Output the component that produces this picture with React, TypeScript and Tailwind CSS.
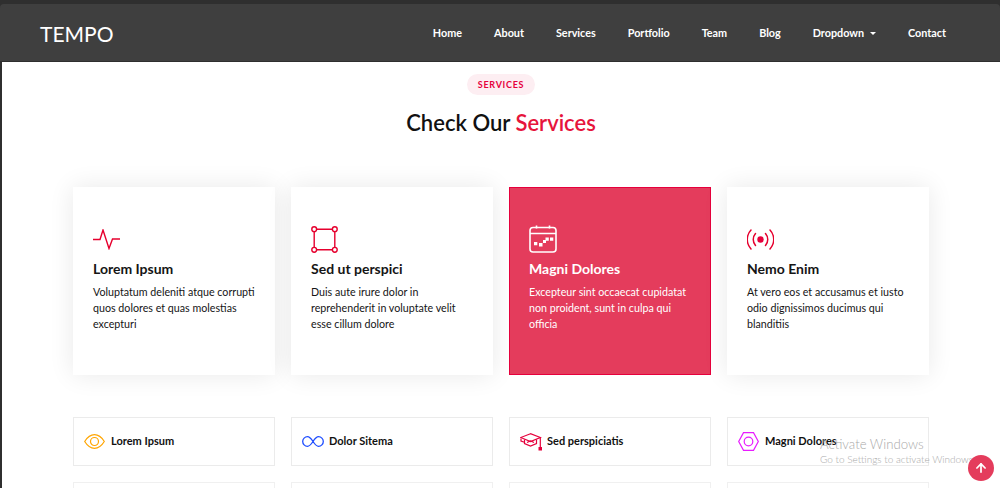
import { ArrowUp } from 'lucide-react';
import type { ReactNode } from 'react';

const font = "[font-family:'Lato',sans-serif]";

const links = ['Home', 'About', 'Services', 'Portfolio', 'Team', 'Blog'];

function Pulse() {
  return (
    <svg width="27" height="21" viewBox="0 0 27 21" fill="none" stroke="#e6002e" strokeWidth="1.4">
      <path d="M0 10.5h7L10 1l6 18.5 3.5-9.5H27" />
    </svg>
  );
}

function Square() {
  return (
    <svg width="27" height="27" viewBox="0 0 27 27" fill="none" stroke="#e6002e" strokeWidth="1.4">
      <path d="M6 3.2h15M23.8 6v15M21 23.8H6M3.2 21V6" />
      <circle cx="3.2" cy="3.2" r="2.4" fill="#fff" />
      <circle cx="23.8" cy="3.2" r="2.4" fill="#fff" />
      <circle cx="3.2" cy="23.8" r="2.4" fill="#fff" />
      <circle cx="23.8" cy="23.8" r="2.4" fill="#fff" />
    </svg>
  );
}

function Calendar() {
  return (
    <svg width="28" height="28" viewBox="0 0 28 28" fill="none" stroke="#fff" strokeWidth="1.6">
      <rect x="1" y="2.5" width="26" height="24.5" rx="3" />
      <path d="M1 8.5h26M7.5 0.5v3M20.5 0.5v3" />
      <path fill="#fff" stroke="none" d="M5 17h3.300v3.300H5zM10 18h3.500v3.500H10zM14 15h3v3h-3zM16.500 12.500h3.300v3.300h-3.300zM21 12.500h3.300v3.300H21z" />
    </svg>
  );
}

function Broadcast() {
  return (
    <svg width="27" height="21" viewBox="0 0 27 21" fill="none" stroke="#e6002e" strokeWidth="1.5" strokeLinecap="round">
      <circle cx="13.5" cy="10.5" r="3.2" fill="#e6003c" stroke="none" />
      <path d="M8.5 4.5c-3 3.500-3 8.500 0 12M18.500 4.500c3 3.500 3 8.500 0 12" />
      <path d="M4 1c-5 5.500-5 13.500 0 19M23 1c5 5.500 5 13.500 0 19" />
    </svg>
  );
}

function Eye() {
  return (
    <svg width="21" height="15" viewBox="0 0 21 15" fill="none" stroke="#ffa500" strokeWidth="1.2">
      <path d="M0.700 7.500C3.500 3 7 0.700 10.500 0.700S17.500 3 20.300 7.500C17.500 12 14 14.300 10.500 14.300S3.500 12 0.700 7.500Z" />
      <circle cx="10.500" cy="7.500" r="4" />
    </svg>
  );
}

function InfinityIcon() {
  return (
    <svg width="22" height="11" viewBox="0 0 22 11" fill="none" stroke="#1e4dff" strokeWidth="1.300">
      <path d="M11 5.500C9 2.500 7.500 0.700 5.500 0.700a4.800 4.800 0 0 0 0 9.600c2 0 3.500-1.800 5.500-4.800s3.500-4.800 5.500-4.800a4.800 4.800 0 0 1 0 9.600c-2 0-3.500-1.800-5.500-4.800Z" />
    </svg>
  );
}

function Cap() {
  return (
    <svg width="22" height="18" viewBox="0 0 22 18" fill="none" stroke="#e6003c" strokeWidth="1.200">
      <path d="M10.500 0.700 0.700 4.500l9.800 4 9.800-4-9.800-3.800Z" />
      <path d="M4.500 6.500v4l6 2.500 6-2.500v-4" />
      <path d="M1 5.500v2.500l3.500 1.300M7 9.500l3.500-1.500 3.500 1.500" />
      <path d="M20.300 4.500v10" />
      <rect x="18.500" y="14" width="3.500" height="3.500" fill="#e6003c" stroke="none" />
    </svg>
  );
}

function Hex() {
  return (
    <svg width="21" height="19" viewBox="0 0 21 19" fill="none" stroke="#e81cff" strokeWidth="1.200">
      <path d="M5.500 0.700h10l4.800 8.800-4.800 8.800h-10L0.700 9.500Z" />
      <circle cx="10.500" cy="9.500" r="4.300" />
    </svg>
  );
}

const cards: { icon: ReactNode; title: string; text: string[]; active?: boolean }[] = [
  { icon: <Pulse />, title: 'Lorem Ipsum', text: ['Voluptatum deleniti atque corrupti', 'quos dolores et quas molestias', 'excepturi'] },
  { icon: <Square />, title: 'Sed ut perspici', text: ['Duis aute irure dolor in', 'reprehenderit in voluptate velit', 'esse cillum dolore'] },
  { icon: <Calendar />, title: 'Magni Dolores', text: ['Excepteur sint occaecat cupidatat', 'non proident, sunt in culpa qui', 'officia'], active: true },
  { icon: <Broadcast />, title: 'Nemo Enim', text: ['At vero eos et accusamus et iusto', 'odio dignissimos ducimus qui', 'blanditiis'] },
];

const rows: { icon: ReactNode; title: string }[] = [
  { icon: <Eye />, title: 'Lorem Ipsum' },
  { icon: <InfinityIcon />, title: 'Dolor Sitema' },
  { icon: <Cap />, title: 'Sed perspiciatis' },
  { icon: <Hex />, title: 'Magni Dolores' },
];

export default function App() {
  return (
    <div className={`relative h-[488px] w-[1000px] overflow-hidden bg-[#2f2f2f] ${font}`}>
      <div className="h-[4px]" />
      <header className="flex h-[58px] items-center justify-between rounded-t-[4px] border-b border-[#2e2e2e] bg-[#3f3f3f] pl-[40px] pr-[54px] pt-[1px]">
        <a className="text-[21px] leading-none text-white">TEMPO</a>
        <nav className="flex items-center gap-[32px] text-[10.800px] font-bold text-white">
          {links.map((l) => (
            <a key={l}>{l}</a>
          ))}
          <a className="flex items-center gap-[6px]">
            Dropdown
            <span className="h-0 w-0 border-x-[3.500px] border-t-[3.500px] border-x-transparent border-t-white" />
          </a>
          <a>Contact</a>
        </nav>
      </header>

      <main className="ml-[2px] h-[426px] bg-white">
        <div className="flex flex-col items-center pt-[12px]">
          <span className="flex h-[21px] items-center rounded-full bg-[#fdeef2] px-[11px] text-[9px] font-bold tracking-[0.7px] text-[#e6003c]">
            SERVICES
          </span>
          <h2 className="mt-[14px] text-[22px] font-semibold leading-[28px] text-[#111]">
            Check Our <span className="text-[#e6143c]">Services</span>
          </h2>
        </div>

        <div className="ml-[71px] mt-[50px] grid w-[856px] grid-cols-4 gap-x-[16px]">
          {cards.map((c) => (
            <div
              key={c.title}
              className={`h-[188px] ${c.active ? 'border border-[#e6003c] bg-[#e43c5c] px-[19px] pt-[37px] text-white' : 'bg-white px-[20px] pt-[38px] text-[#151515] shadow-[0_0_24px_rgba(0,0,0,0.09)]'}`}
            >
              <div className="flex h-[28px] items-center">{c.icon}</div>
              <h3 className="mt-[7px] text-[14px] font-bold leading-[18px]">{c.title}</h3>
              <p className="mt-[6px] text-[10.700px] leading-[16px]">
                {c.text.map((t) => (
                  <span key={t} className="block whitespace-nowrap">
                    {t}
                  </span>
                ))}
              </p>
            </div>
          ))}
        </div>

        <div className="ml-[71px] mt-[42px] grid w-[856px] grid-cols-4 gap-x-[16px] gap-y-[16px]">
          {rows.map((r) => (
            <div key={r.title} className="flex h-[49px] items-center border border-[#ebebeb] pl-[10px]">
              <span className="flex w-[27px] shrink-0 items-center">{r.icon}</span>
              <span className="whitespace-nowrap text-[11px] font-bold text-[#111]">{r.title}</span>
            </div>
          ))}
          {rows.map((r) => (
            <div key={r.title + '2'} className="h-[49px] border border-[#f0f0f0]" />
          ))}
        </div>
      </main>

      <div className="absolute left-[820px] top-[436px] whitespace-nowrap text-[#a9a9a9]">
        <p className="text-[13.200px] font-light leading-[16px]">Activate Windows</p>
        <p className="text-[10px] font-light leading-[14px]">Go to Settings to activate Windows</p>
      </div>

      <a className="absolute left-[968px] top-[455px] flex h-[26px] w-[26px] items-center justify-center rounded-full bg-[#e43c5c] text-white">
        <ArrowUp size={14} strokeWidth={3} />
      </a>
    </div>
  );
}
